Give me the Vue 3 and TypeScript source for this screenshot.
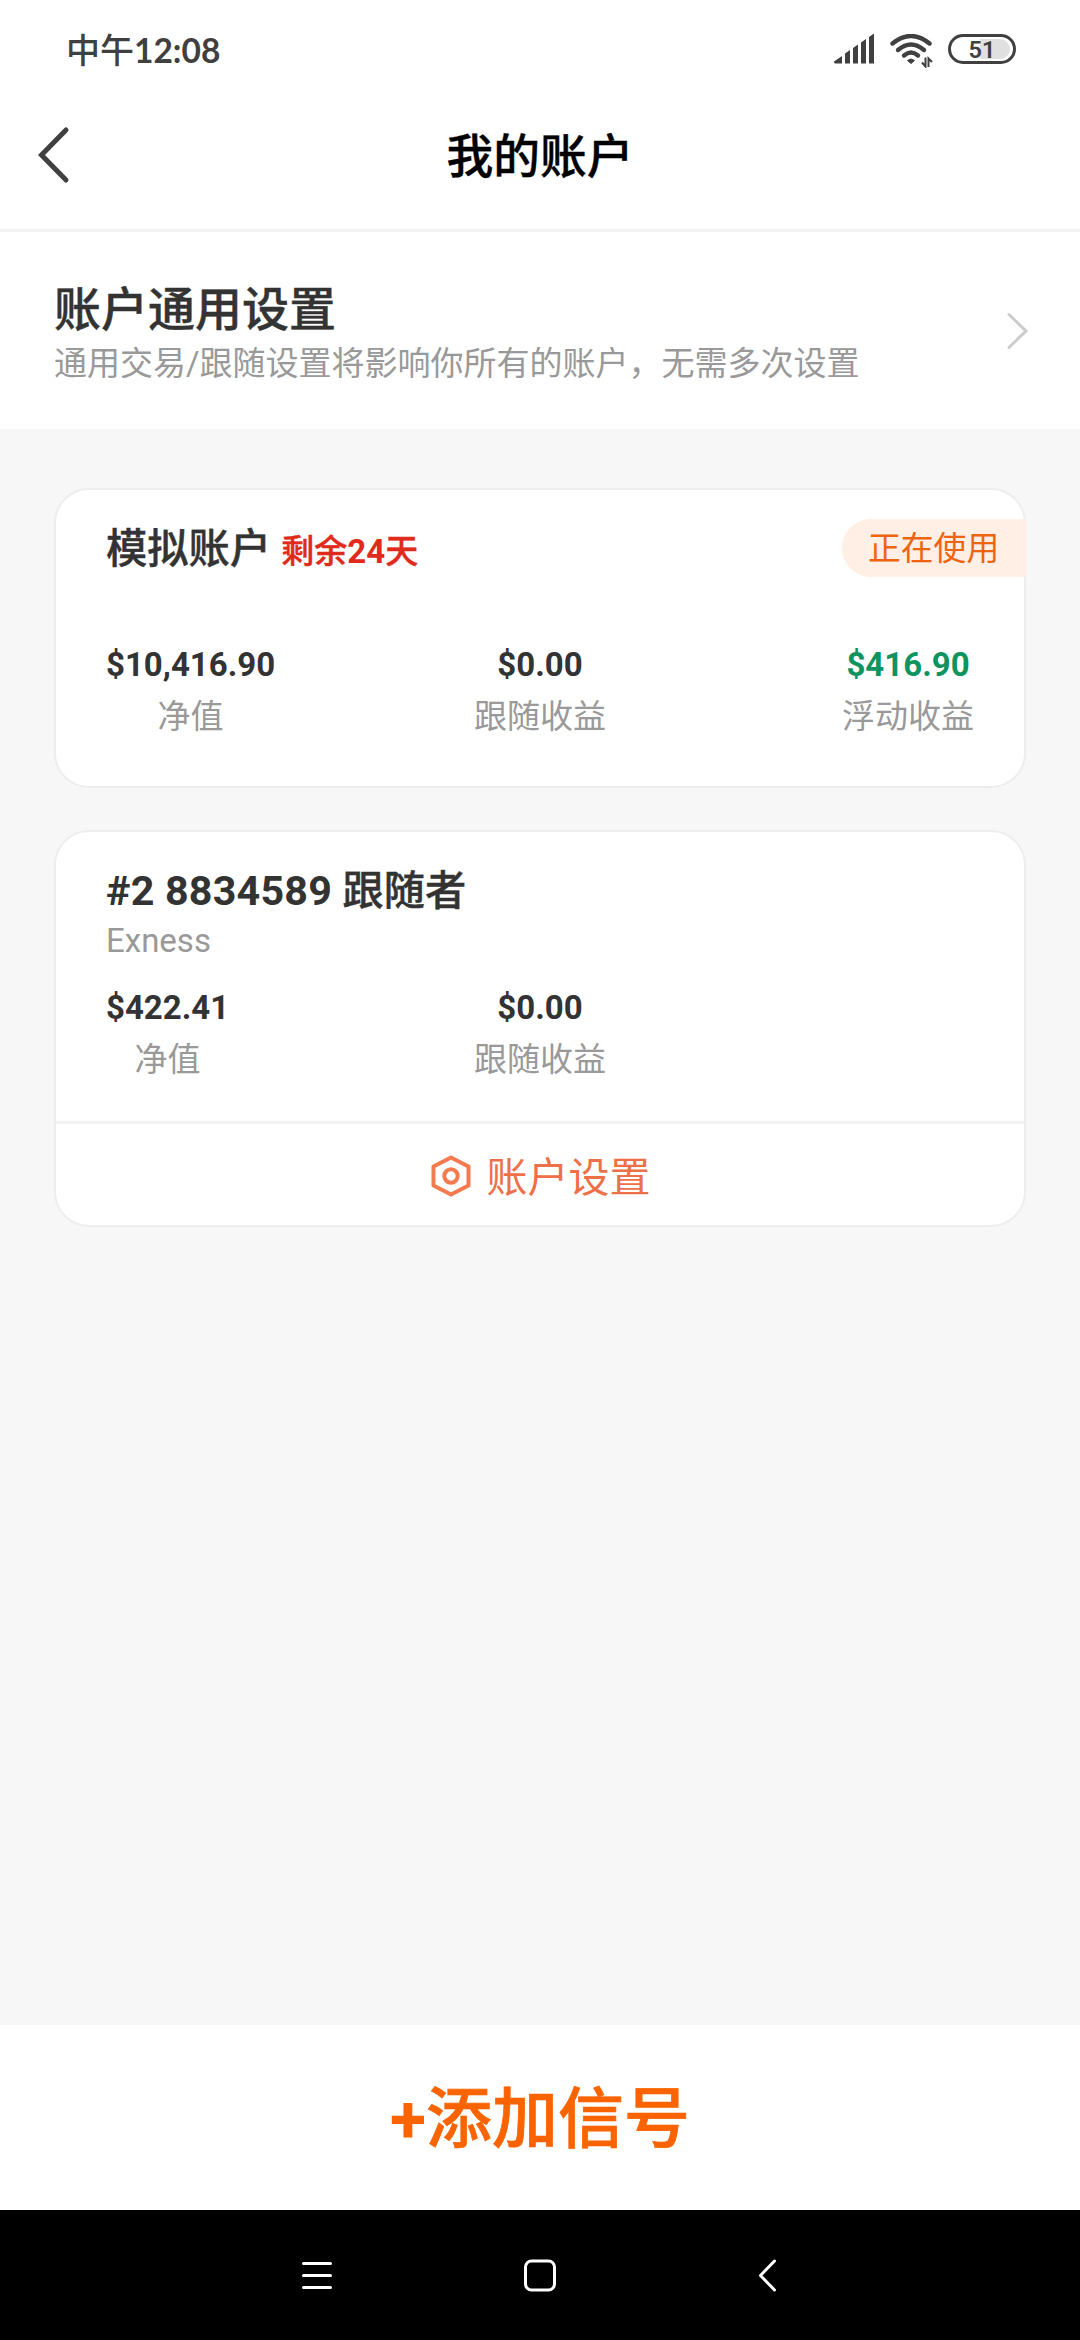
<script setup lang="ts">
interface Stat {
  value: string
  label: string
  tone?: 'gain'
}

interface Account {
  id: string
  number?: string
  name: string
  remaining?: { before: string; days: number; after: string }
  broker?: string
  active: boolean
  stats: Stat[]
  configurable: boolean
}

const accounts: Account[] = [
  {
    id: 'demo',
    name: '模拟账户',
    remaining: { before: '剩余', days: 24, after: '天' },
    active: true,
    stats: [
      { value: '$10,416.90', label: '净值' },
      { value: '$0.00', label: '跟随收益' },
      { value: '$416.90', label: '浮动收益', tone: 'gain' },
    ],
    configurable: false,
  },
  {
    id: 'exness',
    number: '#2 8834589 ',
    name: '跟随者',
    broker: 'Exness',
    active: false,
    stats: [
      { value: '$422.41', label: '净值' },
      { value: '$0.00', label: '跟随收益' },
    ],
    configurable: true,
  },
]
</script>

<template>
  <div class="screen">
    <div class="status">
      <span class="clock">中午<b>12:08</b></span>
      <div class="indicators">
        <svg class="signal" width="40" height="30" viewBox="0 0 40 30">
          <path d="M0 27.5 8 22v7.5H1Q0 29.500 0 27.500ZM11 19.500 16 16v13.500h-5ZM19 14l5-3.500v19h-5ZM27 8.500 32 5v24.500h-5ZM35 3l5-3.500v30h-5Z" />
        </svg>
        <svg class="wifi" width="44" height="34" viewBox="0 0 44 34">
          <g fill="none" stroke="#404040" stroke-width="4.400" stroke-linecap="round">
            <path d="M2.500 9.500Q21 -5.500 39.500 9.500" />
            <path d="M8 16Q21 5 34 16" />
            <path d="M14 21.500Q21 15.500 28 21.500" />
          </g>
          <path d="M17.500 26.500Q21 23.500 24.500 26.500L21 29.500Z" fill="#404040" stroke="#404040" stroke-linejoin="round" />
          <path d="M35.500 23.500V32.500L32 28.500M38.500 33V24.500L42 28" fill="none" stroke="#404040" stroke-width="2" />
        </svg>
        <div class="battery"><span class="charge"></span><span class="level">51</span></div>
      </div>
    </div>

    <header class="bar">
      <svg class="back" width="34" height="60" viewBox="0 0 34 60">
        <path d="M29 5 4.500 30 29 55" />
      </svg>
      <h1>我的账户</h1>
    </header>

    <section class="general">
      <div>
        <h2>账户通用设置</h2>
        <p>通用交易/跟随设置将影响你所有的账户，无需多次设置</p>
      </div>
      <svg class="more" width="24" height="38" viewBox="0 0 24 38">
        <path d="M3 2.500 20 19 3 35.500" />
      </svg>
    </section>

    <main class="list">
      <article v-for="account in accounts" :key="account.id" class="card">
        <div class="head">
          <div class="name">
            <b v-if="account.number">{{ account.number }}</b>{{ account.name }}
            <span v-if="account.remaining" class="left">{{ account.remaining.before }}<b>{{ account.remaining.days }}</b>{{ account.remaining.after }}</span>
          </div>
          <span v-if="account.active" class="badge">正在使用</span>
        </div>
        <div v-if="account.broker" class="broker">{{ account.broker }}</div>
        <div class="stats" :class="{ compact: account.broker }">
          <div v-for="stat in account.stats" :key="stat.label" class="cell">
            <div class="stat">
              <span class="value" :class="stat.tone">{{ stat.value }}</span>
              <span class="label">{{ stat.label }}</span>
            </div>
          </div>
        </div>
        <div v-if="account.configurable" class="settings">
          <svg width="42" height="42" viewBox="0 0 42 42">
            <path d="M21 2.500 38.500 11.500V30.500L21 39.500 3.500 30.500V11.500Z" />
            <circle cx="21" cy="21" r="6.700" />
          </svg>
          <span>账户设置</span>
        </div>
      </article>
    </main>

    <div class="add"><b>+</b>添加信号</div>

    <nav class="nav">
      <svg width="480" height="36" viewBox="0 0 480 36">
        <g fill="none" stroke="#fff" stroke-width="3" stroke-linecap="round" stroke-linejoin="round">
          <path d="M3.500 6.500H30.500M3.500 18.500H30.500M3.500 30.500H30.500" />
          <rect x="225.500" y="4" width="29" height="29" rx="6" />
          <path d="M474.500 4 460.500 18.500 474.500 33" />
        </g>
      </svg>
    </nav>
  </div>
</template>

<style>
body {
  background: #f7f7f7;
}
</style>

<style scoped>
.screen {
  width: 1080px;
  height: 2340px;
  display: flex;
  flex-direction: column;
  overflow: hidden;
  background: #f7f7f7;
  color: #333;
  font-family: Roboto, 'Noto Sans CJK SC', sans-serif;
}
h1, h2, p {
  margin: 0;
}
svg {
  display: block;
  flex: none;
}
b {
  font-weight: 700;
  -webkit-text-stroke: 0;
}
.status {
  height: 80px;
  padding: 18px 64px 0 66px;
  box-sizing: border-box;
  display: flex;
  justify-content: space-between;
  background: #fff;
}
.clock {
  font: 500 34px/64px Lato, 'Noto Sans CJK SC', sans-serif;
  color: #404040;
}
.clock b {
  font-size: 33.500px;
}
.indicators {
  display: flex;
  padding-top: 16px;
}
.signal {
  fill: #404040;
}
.wifi {
  margin-left: 16px;
}
.battery {
  position: relative;
  width: 68px;
  height: 30px;
  margin-left: 14px;
  box-sizing: border-box;
  border: 3px solid #404040;
  border-radius: 15px;
}
.charge {
  position: absolute;
  top: 2px;
  right: 3px;
  width: 30px;
  height: 20px;
  border-radius: 0 10px 10px 0;
  background: #e0e0e0;
}
.level {
  position: absolute;
  inset: 0;
  font-size: 23.500px;
  font-weight: 600;
  line-height: 26px;
  text-align: center;
  color: #404040;
}
.bar {
  height: 152px;
  padding: 0 37px;
  box-sizing: border-box;
  display: grid;
  grid-template-columns: 34px 1fr 34px;
  align-items: center;
  background: #fff;
  border-bottom: 3px solid #f2f2f2;
}
.back {
  fill: none;
  stroke: #404040;
  stroke-width: 5;
  stroke-linecap: round;
}
h1 {
  color: #000;
  font-size: 46.750px;
  font-weight: 500;
  line-height: 64px;
  text-align: center;
  padding-top: 4px;
  -webkit-text-stroke: 0.4px;
}
.general {
  height: 197px;
  padding: 0 50px 0 54px;
  box-sizing: border-box;
  display: flex;
  justify-content: space-between;
  align-items: center;
  background: #fff;
}
h2 {
  padding-top: 3px;
  font-size: 47px;
  font-weight: 500;
  line-height: 64px;
  -webkit-text-stroke: 0.4px;
}
.general p {
  font-size: 33px;
  line-height: 44px;
  color: #999;
}
.more {
  fill: none;
  stroke: #ccc;
  stroke-width: 3;
  stroke-linecap: round;
}
.list {
  flex: 1;
  padding: 59px 54px 0;
  display: flex;
  flex-direction: column;
  gap: 42px;
}
.card {
  background: #fff;
  border: 2px solid #ededed;
  border-radius: 35px;
  padding-top: 29px;
}
.card:first-child {
  padding-bottom: 47px;
}
.head {
  height: 58px;
  padding-left: 50px;
  margin-right: -2px;
  display: flex;
  justify-content: space-between;
}
.name {
  font-size: 41.250px;
  font-weight: 500;
  line-height: 60px;
  white-space: nowrap;
  -webkit-text-stroke: 0.4px;
}
.name b {
  white-space: pre;
}
.name > b {
  letter-spacing: 0.200px;
}
.left {
  font-size: 33px;
  color: #e02a1c;
}
.badge {
  width: 184px;
  box-sizing: border-box;
  padding-left: 26px;
  border-radius: 29px 0 0 29px;
  background: #ffefe5;
  color: #ee6410;
  font-size: 32.800px;
  line-height: 61px;
}
.broker {
  height: 40px;
  padding-left: 50px;
  font-size: 33px;
  line-height: 44px;
  color: #999;
}
.stats {
  display: grid;
  grid-template-columns: repeat(3, 1fr);
  padding: 66px 50px 0;
}
.stats.compact {
  padding: 27px 50px 39px;
}
.cell {
  display: flex;
  justify-content: center;
}
.cell:nth-child(1) {
  justify-content: flex-start;
}
.cell:nth-child(3) {
  justify-content: flex-end;
}
.stat {
  display: flex;
  flex-direction: column;
  align-items: center;
  gap: 8px;
  font-size: 33px;
  line-height: 44px;
}
.value {
  font-weight: 700;
}
.value.gain {
  color: #0f9360;
}
.label {
  color: #999;
}
.settings {
  height: 101px;
  border-top: 3px solid #f2f2f2;
  display: flex;
  align-items: center;
  justify-content: center;
  gap: 15px;
  font-size: 41px;
  line-height: 60px;
  color: #ee7048;
}
.settings svg {
  margin-top: 3px;
  fill: none;
  stroke: #f47a50;
  stroke-width: 4;
  stroke-linejoin: round;
}
.settings span {
  padding-top: 7px;
}
.add {
  height: 185px;
  flex: none;
  background: #fff;
  color: #fa6400;
  font-size: 66px;
  font-weight: 500;
  line-height: 190px;
  text-align: center;
  -webkit-text-stroke: 0.700px;
}
.nav {
  height: 130px;
  flex: none;
  display: flex;
  align-items: center;
  justify-content: center;
  background: #000;
}
</style>
